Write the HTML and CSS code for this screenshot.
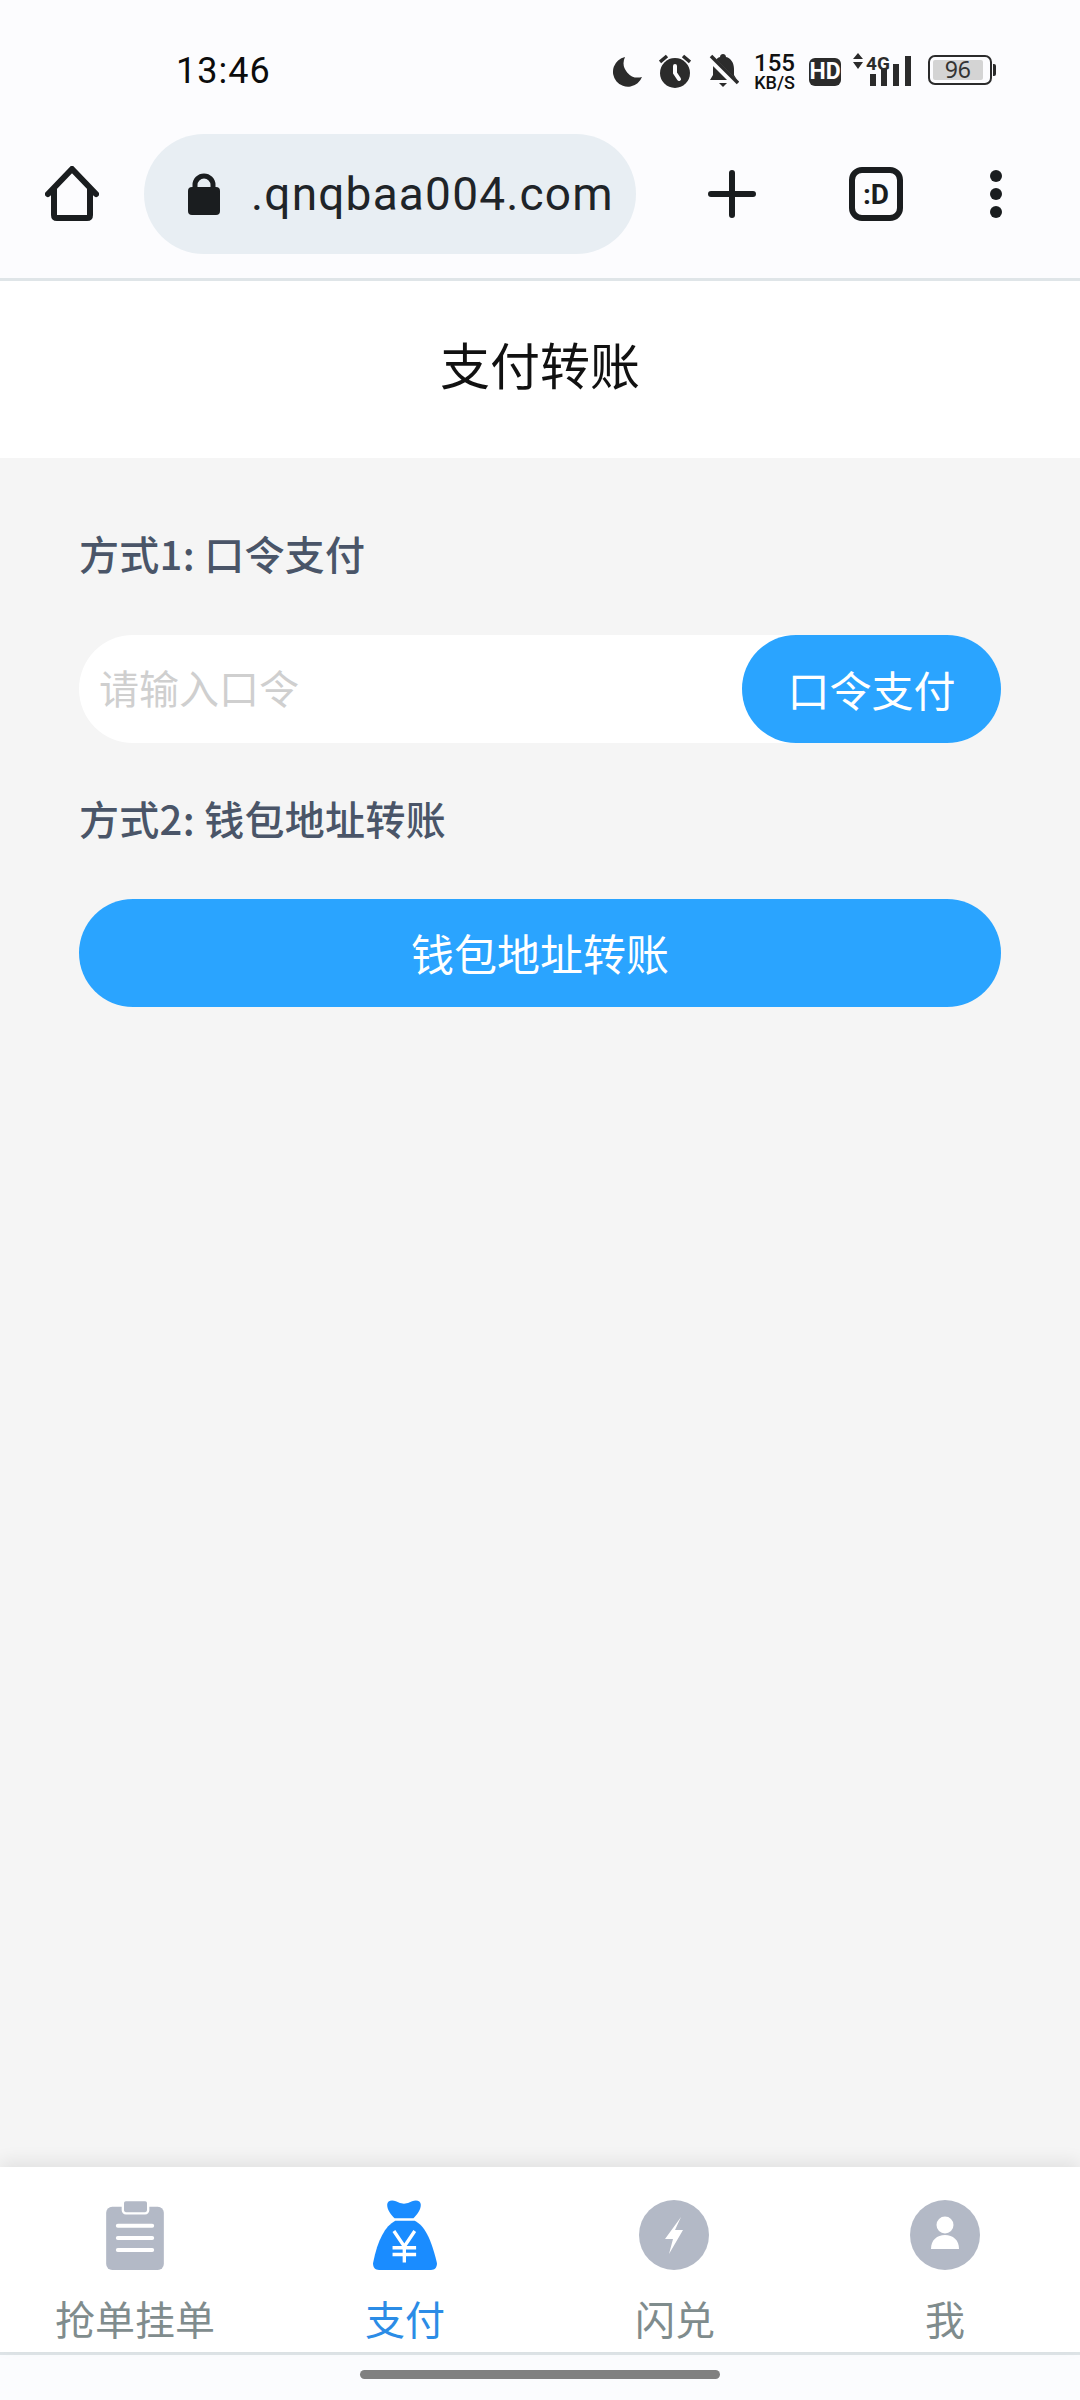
FILE: index.html
```html
<!DOCTYPE html>
<html lang="zh-CN">
<head>
<meta charset="utf-8">
<title>支付转账</title>
<link rel="stylesheet" href="styles.css">
</head>
<body>
<div class="app">
  <div class="browser">
    <div class="status">
      <span class="time">13:46</span>
      <div class="status-icons">
        <svg class="si-moon" width="30" height="32" viewBox="0 0 30 32"><path d="M13 1 A15 15 0 1 0 30 21 A14.500 14.500 0 0 1 13 1Z"/></svg>
        <svg class="si-alarm" width="32" height="34" viewBox="0 0 32 34"><circle cx="16" cy="19" r="15"/><path d="M1 8 L8 2 M31 8 L24 2" class="si-line"/><path d="M16 12 V19 L20 25" class="si-hand"/></svg>
        <svg class="si-bell" width="31" height="35" viewBox="0 0 31 35"><path d="M15 1 C16.500 1 18 2 18 4 C23 5 26 10 26 16 V22 L29 27 H2 L5 22 V16 C5 10 8 5 12 4 C12 2 13.500 1 15 1Z"/><path d="M11 30 H19 L15 34Z"/><path d="M1 4 L30 33" class="si-cut"/><path d="M3 3 L30 30" class="si-slash"/></svg>
        <div class="speed"><span class="speed-num">155</span><span class="speed-unit">KB/S</span></div>
        <span class="hd">HD</span>
        <svg class="si-signal" width="60" height="40" viewBox="0 -6 60 40"><path d="M0 6 L5 0 L10 6Z M0 9 L5 16 L10 9Z"/><text x="13" y="17" class="si-4g">4G</text><rect x="17" y="21" width="6" height="12"/><rect x="28" y="16" width="6" height="17"/><rect x="40" y="11" width="6" height="22"/><rect x="52" y="3" width="6" height="30"/></svg>
        <div class="battery"><div class="battery-box"><span class="battery-level">96</span></div><span class="battery-nub"></span></div>
      </div>
    </div>
    <div class="toolbar">
      <svg class="tool-home" width="54" height="56" viewBox="0 0 54 56"><path d="M3 28 L27 3 L51 28 M9 23 V49 Q9 52 12 52 H42 Q45 52 45 49 V23"/></svg>
      <div class="urlbar">
        <svg class="lock" width="32" height="42" viewBox="0 0 32 42"><path class="lock-arc" d="M7 16 V12 a9 9 0 0 1 18 0 V16"/><rect y="14" width="32" height="28" rx="4"/></svg>
        <span class="url">.qnqbaa004.com</span>
      </div>
      <svg class="tool-plus" width="48" height="48" viewBox="0 0 48 48"><path d="M3 24 H45 M24 3 V45"/></svg>
      <div class="tool-tabs">:D</div>
      <div class="tool-menu"><i></i><i></i><i></i></div>
    </div>
  </div>

  <header class="page-head">支付转账</header>

  <main class="content">
    <div class="label">方式1: 口令支付</div>
    <div class="code-row">
      <input class="code-input" type="text" placeholder="请输入口令">
      <button class="code-btn">口令支付</button>
    </div>
    <div class="label label-second">方式2: 钱包地址转账</div>
    <button class="wallet-btn">钱包地址转账</button>
  </main>

  <nav class="tabbar">
    <div class="tab">
      <svg class="tab-icon" width="58" height="70" viewBox="0 0 173 210"><rect y="20" width="173" height="190" rx="18" fill="#b3b9c6"/><rect x="50" y="0" width="76" height="40" rx="9" fill="#b3b9c6" stroke="#fff" stroke-width="7"/><path d="M35 77 H138 M35 114 H138 M35 150 H138" stroke="#fff" stroke-width="12" stroke-linecap="round"/></svg>
      <span class="tab-label">抢单挂单</span>
    </div>
    <div class="tab tab-active">
      <svg class="tab-icon" width="64" height="70" viewBox="0 0 190 208"><path fill="#1a8cff" d="M42 14 C42 2 56 -2 68 4 Q92 18 116 4 C128 -2 142 2 142 14 C142 30 130 44 120 54 H64 C54 44 42 30 42 14Z"/><path fill="#1a8cff" d="M66 62 H124 C152 76 172 112 190 188 C190 200 184 208 172 208 H18 C6 208 0 200 0 188 C14 118 36 78 66 62Z"/><path d="M62 92 L93 138 L124 92 M93 138 V186 M58 142 H128 M58 162 H128" fill="none" stroke="#fff" stroke-width="10"/></svg>
      <span class="tab-label">支付</span>
    </div>
    <div class="tab tab-bolt">
      <svg class="tab-icon" width="70" height="70" viewBox="0 0 70 70"><circle cx="35" cy="35" r="35" fill="#b3b9c6"/><path fill="#fff" d="M42 17 L26 39 H34 L30 54 L44 30 H36Z"/></svg>
      <span class="tab-label">闪兑</span>
    </div>
    <div class="tab">
      <svg class="tab-icon" width="70" height="70" viewBox="0 0 70 70"><circle cx="35" cy="35" r="35" fill="#b3b9c6"/><circle cx="35" cy="25" r="8.500" fill="#fff"/><path fill="#fff" d="M21 49 C21 40 27 35 35 35 C43 35 49 40 49 49Z"/></svg>
      <span class="tab-label">我</span>
    </div>
  </nav>

  <div class="gesture"><span class="gesture-pill"></span></div>
</div>
</body>
</html>
```
FILE: styles.css
```css
* { box-sizing: border-box; }
html, body { margin: 0; padding: 0; }
body { font-family: "Noto Sans CJK SC", "Noto Sans", sans-serif; background: #f5f5f5; }

.app { width: 1080px; height: 2400px; display: flex; flex-direction: column; overflow: hidden; }

.browser { background: #fcfcfe; border-bottom: 3px solid #dfe5e8; height: 281px; flex: none; }

.status { height: 110px; display: flex; align-items: flex-start; padding: 0 84px 0 176px; justify-content: space-between; }
.time { font-family: Roboto, sans-serif; font-size: 36px; line-height: 42px; margin-top: 50px; letter-spacing: 1px; color: #0c0c0c; }
.status-icons { display: flex; align-items: flex-start; padding-top: 53px; fill: #2b2b2b; }
.status-icons svg { display: block; flex: none; }
.si-moon { margin-top: 3px; }
.si-alarm { margin-left: 17px; margin-top: 1px; }
.si-line { fill: none; stroke: #2b2b2b; stroke-width: 3.500; }
.si-hand { fill: none; stroke: #fcfcfe; stroke-width: 4; stroke-linecap: round; }
.si-bell { margin-left: 17px; }
.si-cut { fill: none; stroke: #fcfcfe; stroke-width: 7; }
.si-slash { fill: none; stroke: #2b2b2b; stroke-width: 3.500; }
.speed { margin-left: 15px; width: 41px; height: 36px; display: flex; flex-direction: column; font-family: Roboto, sans-serif; color: #111; align-items: center; }
.speed-num { font-size: 24px; line-height: 20px; font-weight: 500; }
.speed-unit { font-size: 18px; line-height: 15px; margin-top: 2px; font-weight: 500; white-space: nowrap; }
.hd { margin-left: 14px; margin-top: 5px; width: 32px; height: 28px; border-radius: 6px; background: #2b2b2b; color: #fff; font-family: "Liberation Sans Narrow", Roboto, sans-serif; font-weight: 700; font-size: 23px; line-height: 28px; text-align: center; }
.status-icons .si-signal { margin-left: 12px; margin-top: -6px; }
.si-4g { font-family: "Liberation Sans Narrow", Roboto, sans-serif; font-weight: 700; font-size: 19px; }
.battery { margin-left: 15px; margin-top: 2px; display: flex; align-items: center; }
.battery-box { width: 64px; height: 30px; border: 2.500px solid #2b2b2b; border-radius: 7px; padding: 3px; }
.battery-level { display: block; height: 100%; width: 92%; background: #d4d4d4; border-radius: 2px; font-family: "Noto Sans", sans-serif; font-size: 23px; line-height: 19px; text-align: center; color: #333; }
.battery-nub { width: 3px; height: 12px; margin-left: 1px; background: #2b2b2b; border-radius: 0 2px 2px 0; }

.toolbar { height: 168px; display: flex; align-items: center; padding-left: 45px; }
.tool-home { flex: none; fill: none; stroke: #1a1d1f; stroke-width: 6; stroke-linecap: round; stroke-linejoin: round; }
.urlbar { margin-left: 45px; width: 492px; height: 120px; border-radius: 60px; background: #e8eef3; display: flex; align-items: center; padding-left: 44px; flex: none; }
.lock { flex: none; fill: #1a1d1f; }
.lock-arc { fill: none; stroke: #1a1d1f; stroke-width: 5; }
.url { margin-left: 31px; font-family: Roboto, sans-serif; font-size: 46px; letter-spacing: 1.200px; color: #1f2428; white-space: nowrap; }
.tool-plus { margin-left: 72px; flex: none; fill: none; stroke: #1a1d1f; stroke-width: 6; stroke-linecap: round; }
.tool-tabs { margin-left: 93px; width: 54px; height: 54px; border: 6px solid #1a1d1f; border-radius: 13px; display: flex; align-items: center; justify-content: center; font-family: "Liberation Sans Narrow", Roboto, sans-serif; font-weight: 700; font-size: 28px; color: #1a1d1f; flex: none; }
.tool-menu { margin-left: 87px; display: flex; flex-direction: column; gap: 6px; flex: none; }
.tool-menu i { display: block; width: 12px; height: 12px; border-radius: 50%; background: #1a1d1f; }

.page-head { flex: none; height: 177px; background: #fff; padding-top: 46px; text-align: center; font-size: 50px; line-height: 72px; color: #111; }

.content { flex: 1; padding: 65px 79px 0; background: #f5f5f5; }
.label { font-size: 40px; line-height: 60px; font-weight: 500; letter-spacing: 0.300px; color: #4a5568; height: 60px; margin-bottom: 52px; }
.label-second { margin-bottom: 51px; }
.code-row { display: flex; height: 108px; margin-bottom: 45px; background: #fff; border-radius: 54px; }
.code-input { flex: 1; min-width: 0; height: 104px; border: 0; outline: 0; background: transparent; padding: 0 0 0 20px; font-family: inherit; font-size: 40px; color: #333; }
.code-input::placeholder { color: #cfcfcf; opacity: 1; }
.code-btn, .wallet-btn { border: 0; background: #2aa4ff; color: #fff; font-family: inherit; border-radius: 54px; padding: 0 0 2px; }
.code-btn { width: 259px; font-size: 42px; }
.wallet-btn { display: block; width: 100%; height: 108px; font-size: 43px; }

.tabbar { flex: none; height: 185px; background: #fff; display: grid; grid-template-columns: repeat(4, 1fr); box-shadow: 0 -6px 16px rgba(0, 0, 0, 0.08); position: relative; }
.tab { display: flex; flex-direction: column; align-items: center; padding-top: 33px; }
.tab-bolt .tab-icon { margin-right: 2px; }
.tab-icon { display: block; flex: none; }
.tab-label { margin-top: 19px; font-size: 40px; line-height: 58px; color: #7f8c8d; }
.tab-active .tab-label { color: #2b8ce6; }

.gesture { flex: none; height: 48px; background: #fbfcfe; border-top: 3px solid #dfe5e8; display: flex; justify-content: center; padding-top: 15px; }
.gesture-pill { display: block; width: 360px; height: 9px; border-radius: 5px; background: #808080; }
```
